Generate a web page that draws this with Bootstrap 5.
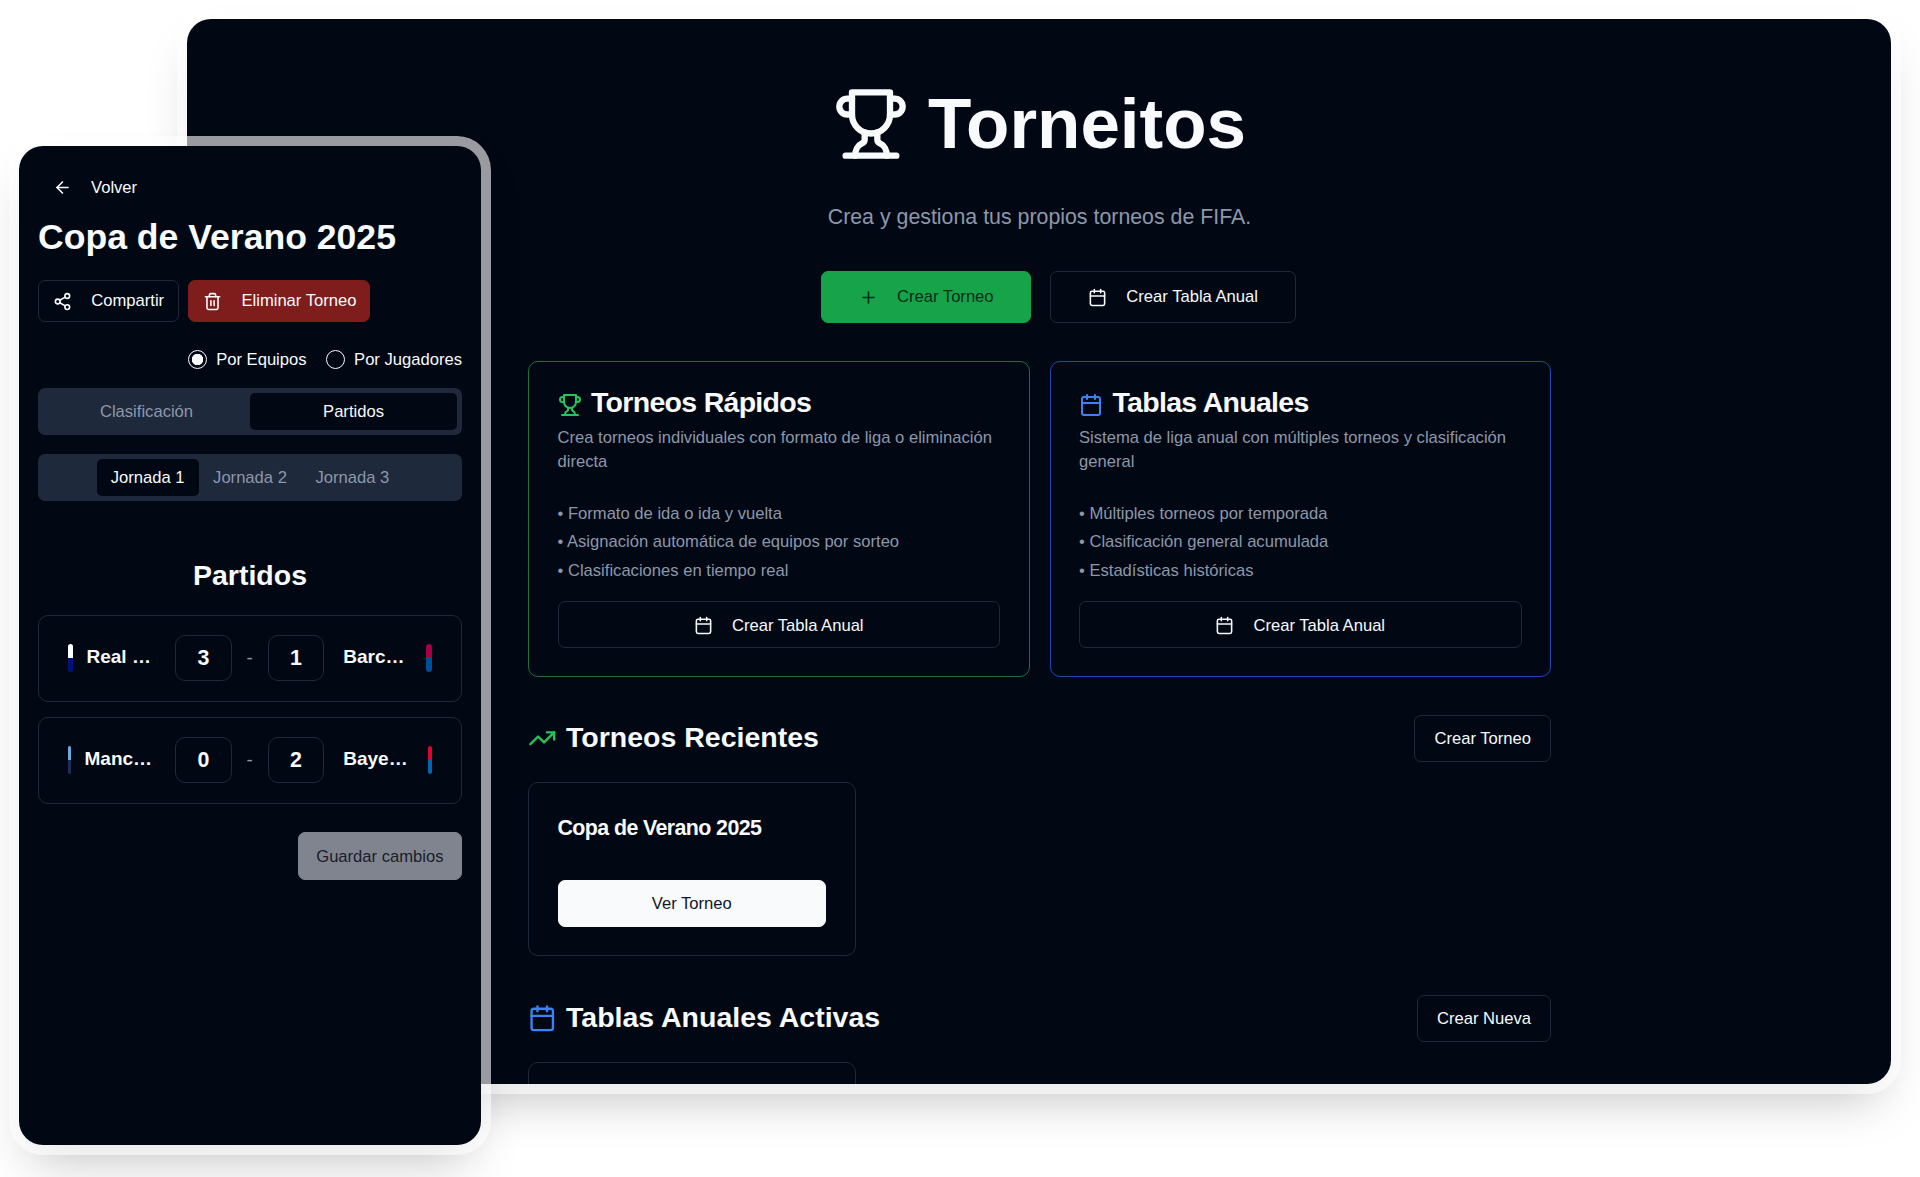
<!DOCTYPE html>
<html lang="es">
<head>
<meta charset="utf-8">
<title>Torneitos</title>
<link href="https://cdn.jsdelivr.net/npm/bootstrap@5.3.0/dist/css/bootstrap.min.css" rel="stylesheet">
<style>
:root{--ink:#010814;--line:#1e293b;--fg:#f8fafc;--muted:#8d97aa;}
html,body{height:100%;overflow:hidden;background:#fff;}
body{font-family:"Liberation Sans",Arial,sans-serif;font-size:16.6px;color:var(--fg);position:relative;}
.ico{fill:none;stroke:currentColor;stroke-width:2;stroke-linecap:round;stroke-linejoin:round;flex:none;width:19px;height:19px;}
.ico-h{width:76px;height:76px;}
.ico-c{width:24px;height:24px;}
.ico-s{width:28.5px;height:28.5px;}
.c-green{color:#22c55e;}
.c-blue{color:#3b82f6;}

.win-frame{box-shadow:0 0 0 10px rgba(255,255,255,.6),0 25px 50px -12px rgba(0,0,0,.25);}
.win-wide{position:absolute;left:187px;top:19px;width:1704px;height:1065px;background:var(--ink);border-radius:24px;}
.win-phone{position:absolute;left:19px;top:146px;width:462px;height:999px;background:var(--ink);border-radius:24px;padding:22px 19px 0;}
.wide-clip{height:100%;overflow:hidden;border-radius:24px;padding-top:63px;}
.wide-inner{width:1023px;margin:0 0 0 341px;}

.hero-title{font-size:71px;font-weight:700;line-height:84px;margin:0;gap:19px;color:var(--fg);}
.hero-sub{font-size:21.35px;line-height:33px;color:var(--muted);margin:34.5px 0 0;}
.hero-btns{margin:37px 0 0 38px;gap:19px;}

.btn-t{--bs-btn-font-size:16.6px;--bs-btn-line-height:23.75px;--bs-btn-border-radius:7px;--bs-btn-color:var(--fg);--bs-btn-bg:var(--ink);--bs-btn-border-color:var(--line);--bs-btn-hover-color:var(--fg);--bs-btn-hover-bg:var(--ink);--bs-btn-hover-border-color:var(--line);--bs-btn-padding-y:0;gap:19px;font-family:inherit;padding-top:1.5px;}
.btn-big{height:52px;--bs-btn-padding-x:36.9px;}
.btn-md{height:47px;--bs-btn-padding-x:19px;}
.btn-sm2{height:42px;--bs-btn-padding-x:14.3px;}
.btn-green{--bs-btn-bg:#16a34a;--bs-btn-border-color:#16a34a;--bs-btn-color:#052e16;--bs-btn-hover-bg:#16a34a;--bs-btn-hover-border-color:#16a34a;--bs-btn-hover-color:#052e16;}
.btn-red{--bs-btn-bg:#7f1d1d;--bs-btn-border-color:#7f1d1d;--bs-btn-hover-bg:#7f1d1d;--bs-btn-hover-border-color:#7f1d1d;padding-left:14px;padding-right:12.5px;}
.btn-light2{--bs-btn-bg:#f8fafc;--bs-btn-border-color:#f8fafc;--bs-btn-color:#0f172a;--bs-btn-hover-bg:#f8fafc;--bs-btn-hover-border-color:#f8fafc;--bs-btn-hover-color:#0f172a;}
.btn-dim{--bs-btn-bg:#80848e;--bs-btn-border-color:#80848e;--bs-btn-color:#1a1d2b;--bs-btn-hover-bg:#80848e;--bs-btn-hover-border-color:#80848e;--bs-btn-hover-color:#1a1d2b;height:47.5px;--bs-btn-padding-x:17.5px;}
.btn-ghost{--bs-btn-border-color:transparent;--bs-btn-hover-border-color:transparent;height:38px;--bs-btn-padding-x:14px;}

.tcard{--bs-card-bg:var(--ink);--bs-card-border-color:var(--line);--bs-card-border-radius:10px;--bs-card-inner-border-radius:9px;--bs-card-color:var(--fg);}
.tcard-g{--bs-card-border-color:#1f7040;}
.tcard-b{--bs-card-border-color:#2547b5;}
.feat-row{margin-top:38.5px;gap:20px;}
.feat-row .tcard{flex:1 1 0;height:316px;}
.tcard-pad{padding:28.5px;}
.feat-title{font-size:28.5px;line-height:28.5px;height:28.5px;font-weight:700;letter-spacing:-.7px;margin:0;gap:9.5px;}
.feat-title span{margin-bottom:5px;}
.feat-desc{color:var(--muted);line-height:23.75px;margin:7px 0 0;}
.feat-list{color:var(--muted);line-height:23.75px;margin:28px 0 19px;padding:0;list-style:none;display:flex;flex-direction:column;gap:4.75px;}

.sect-head{margin-top:38px;height:47px;}
.sect-head2{margin-top:39px;}
.sect-title{font-size:28.5px;line-height:34px;font-weight:700;margin:0;gap:9.5px;}
.sect-title span{margin-bottom:3px;}
.mini-card{width:327.5px;margin-top:20px;}
.mini-h{height:174px;}
.mini-title{font-size:21.4px;line-height:30px;font-weight:700;letter-spacing:-.6px;margin:1px 0 37px;}

.p-title{font-size:35.6px;line-height:47.5px;font-weight:700;margin:8px 0 0;}
.p-actions{gap:9px;margin-top:18px;}
.p-radios{gap:19px;margin-top:26px;height:24px;}
.p-radio{gap:9.5px;line-height:24px;}
.p-radio .form-check-input{width:19px;height:19px;margin:0;background-color:transparent;background-image:none;border:1.5px solid var(--fg);}
.p-radio .form-check-input:checked{background:radial-gradient(circle,var(--fg) 0 5.5px,transparent 6px);border-color:var(--fg);}
.seg-bar{background:var(--line);border-radius:7px;padding:5px;height:47px;}
.seg-a{margin-top:16px;}
.seg-b{margin-top:19px;}
.seg-bar .nav-link{color:var(--muted);font-size:16.6px;line-height:23.75px;padding:7.5px 14.25px 6.5px;border-radius:5px;text-align:center;}
.seg-bar .nav-link.active{background:var(--ink);color:var(--fg);}
.p-h{font-size:28.5px;line-height:34px;font-weight:700;text-align:center;margin:57px 0 0;}
.match{margin-top:15px;height:87px;}
.match-first{margin-top:23px;}
.match-in{padding:0 28.5px;height:100%;}
.team{width:88.75px;gap:14px;}
.team-name{font-size:19px;font-weight:700;line-height:24px;min-width:0;flex:1 1 0;margin-top:-2px;}
.stripe{display:flex;flex-direction:column;height:28px;border-radius:3px;overflow:hidden;flex:none;}
.stripe i{display:block;flex:1;}
.w5{width:5px;}.w6{width:6px;}.w3{width:3px;}.w4{width:4px;}
.s-wh{background:#fff;}.s-nv{background:#00127a;}.s-gr{background:#a50044;}.s-bc{background:#004d98;}
.s-sk{background:#6cabdd;}.s-dk{background:#1c2c5b;}.s-rd{background:#dc052d;}.s-by{background:#0066b2;}
.score-box{width:149px;margin:0 19px;color:var(--muted);font-size:19px;}
.score-in{width:56.5px;height:46.5px;padding:0;text-align:center;font-size:21.4px;font-weight:700;color:var(--fg);background:var(--ink);border:1px solid var(--line);border-radius:10px;font-family:inherit;}
.score-in:focus{color:var(--fg);background:var(--ink);border-color:var(--line);box-shadow:none;}
.save-row{margin-top:28.5px;}
</style>
</head>
<body>
<svg width="0" height="0" class="position-absolute">
<defs>
<symbol id="i-trophy" viewBox="0 0 24 24"><path d="M6 9H4.5a2.5 2.5 0 0 1 0-5H6"/><path d="M18 9h1.5a2.5 2.5 0 0 0 0-5H18"/><path d="M4 22h16"/><path d="M10 14.66V17c0 .55-.47.98-.97 1.21C7.85 18.75 7 20.24 7 22"/><path d="M14 14.66V17c0 .55.47.98.97 1.21C16.15 18.75 17 20.24 17 22"/><path d="M18 2H6v7a6 6 0 0 0 12 0V2Z"/></symbol>
<symbol id="i-cal" viewBox="0 0 24 24"><path d="M8 2v4"/><path d="M16 2v4"/><rect width="18" height="18" x="3" y="4" rx="2"/><path d="M3 10h18"/></symbol>
<symbol id="i-plus" viewBox="0 0 24 24"><path d="M5 12h14"/><path d="M12 5v14"/></symbol>
<symbol id="i-back" viewBox="0 0 24 24"><path d="m12 19-7-7 7-7"/><path d="M19 12H5"/></symbol>
<symbol id="i-share" viewBox="0 0 24 24"><circle cx="18" cy="5" r="3"/><circle cx="6" cy="12" r="3"/><circle cx="18" cy="19" r="3"/><line x1="8.59" x2="15.42" y1="13.51" y2="17.49"/><line x1="15.41" x2="8.59" y1="6.51" y2="10.49"/></symbol>
<symbol id="i-trash" viewBox="0 0 24 24"><path d="M3 6h18"/><path d="M19 6v14c0 1-1 2-2 2H7c-1 0-2-1-2-2V6"/><path d="M8 6V4c0-1 1-2 2-2h4c1 0 2 1 2 2v2"/><line x1="10" x2="10" y1="11" y2="17"/><line x1="14" x2="14" y1="11" y2="17"/></symbol>
<symbol id="i-trend" viewBox="0 0 24 24"><polyline points="22 7 13.5 15.5 8.5 10.5 2 17"/><polyline points="16 7 22 7 22 13"/></symbol>
</defs>
</svg>

<section class="win-wide win-frame">
  <div class="wide-clip">
    <div class="wide-inner">
      <h1 class="hero-title d-flex justify-content-center align-items-center">
        <svg class="ico ico-h"><use href="#i-trophy"/></svg><span>Torneitos</span>
      </h1>
      <p class="hero-sub text-center">Crea y gestiona tus propios torneos de FIFA.</p>
      <div class="hero-btns d-flex justify-content-center">
        <button class="btn btn-t btn-big btn-green d-inline-flex align-items-center"><svg class="ico"><use href="#i-plus"/></svg>Crear Torneo</button>
        <button class="btn btn-t btn-big d-inline-flex align-items-center"><svg class="ico"><use href="#i-cal"/></svg>Crear Tabla Anual</button>
      </div>

      <div class="feat-row d-flex">
        <div class="card tcard tcard-g">
          <div class="tcard-pad">
            <h3 class="feat-title d-flex align-items-center"><svg class="ico ico-c c-green"><use href="#i-trophy"/></svg><span>Torneos Rápidos</span></h3>
            <p class="feat-desc">Crea torneos individuales con formato de liga o eliminación directa</p>
            <ul class="feat-list">
              <li>• Formato de ida o ida y vuelta</li>
              <li>• Asignación automática de equipos por sorteo</li>
              <li>• Clasificaciones en tiempo real</li>
            </ul>
            <button class="btn btn-t btn-md w-100 d-flex align-items-center justify-content-center"><svg class="ico"><use href="#i-cal"/></svg>Crear Tabla Anual</button>
          </div>
        </div>
        <div class="card tcard tcard-b">
          <div class="tcard-pad">
            <h3 class="feat-title d-flex align-items-center"><svg class="ico ico-c c-blue"><use href="#i-cal"/></svg><span>Tablas Anuales</span></h3>
            <p class="feat-desc">Sistema de liga anual con múltiples torneos y clasificación general</p>
            <ul class="feat-list">
              <li>• Múltiples torneos por temporada</li>
              <li>• Clasificación general acumulada</li>
              <li>• Estadísticas históricas</li>
            </ul>
            <button class="btn btn-t btn-md w-100 d-flex align-items-center justify-content-center"><svg class="ico"><use href="#i-cal"/></svg>Crear Tabla Anual</button>
          </div>
        </div>
      </div>

      <div class="sect-head d-flex justify-content-between align-items-center">
        <h2 class="sect-title d-flex align-items-center"><svg class="ico ico-s c-green"><use href="#i-trend"/></svg><span>Torneos Recientes</span></h2>
        <button class="btn btn-t btn-md">Crear Torneo</button>
      </div>
      <div class="card tcard mini-card mini-h">
        <div class="tcard-pad">
          <h4 class="mini-title">Copa de Verano 2025</h4>
          <button class="btn btn-t btn-md btn-light2 w-100">Ver Torneo</button>
        </div>
      </div>

      <div class="sect-head sect-head2 d-flex justify-content-between align-items-center">
        <h2 class="sect-title d-flex align-items-center"><svg class="ico ico-s c-blue"><use href="#i-cal"/></svg><span>Tablas Anuales Activas</span></h2>
        <button class="btn btn-t btn-md">Crear Nueva</button>
      </div>
      <div class="card tcard mini-card mini-h"></div>
    </div>
  </div>
</section>

<section class="win-phone win-frame">
  <button class="btn btn-t btn-ghost d-inline-flex align-items-center"><svg class="ico"><use href="#i-back"/></svg>Volver</button>
  <h2 class="p-title">Copa de Verano 2025</h2>
  <div class="p-actions d-flex">
    <button class="btn btn-t btn-sm2 d-inline-flex align-items-center"><svg class="ico"><use href="#i-share"/></svg>Compartir</button>
    <button class="btn btn-t btn-sm2 btn-red d-inline-flex align-items-center"><svg class="ico"><use href="#i-trash"/></svg>Eliminar Torneo</button>
  </div>
  <div class="p-radios d-flex justify-content-end align-items-center">
    <label class="p-radio d-flex align-items-center"><input class="form-check-input" type="radio" name="modo" checked>Por Equipos</label>
    <label class="p-radio d-flex align-items-center"><input class="form-check-input" type="radio" name="modo">Por Jugadores</label>
  </div>
  <ul class="nav nav-justified seg-bar seg-a">
    <li class="nav-item"><a class="nav-link" href="#">Clasificación</a></li>
    <li class="nav-item"><a class="nav-link active" href="#">Partidos</a></li>
  </ul>
  <ul class="nav justify-content-center seg-bar seg-b">
    <li class="nav-item"><a class="nav-link active" href="#">Jornada 1</a></li>
    <li class="nav-item"><a class="nav-link" href="#">Jornada 2</a></li>
    <li class="nav-item"><a class="nav-link" href="#">Jornada 3</a></li>
  </ul>
  <h3 class="p-h">Partidos</h3>

  <div class="card tcard match match-first">
    <div class="match-in d-flex align-items-center">
      <div class="team d-flex align-items-center"><span class="stripe w5"><i class="s-wh"></i><i class="s-nv"></i></span><span class="team-name text-truncate">Real Madrid</span></div>
      <div class="score-box d-flex justify-content-between align-items-center"><input class="form-control score-in" value="3" aria-label="Goles local"><span>-</span><input class="form-control score-in" value="1" aria-label="Goles visitante"></div>
      <div class="team d-flex align-items-center"><span class="team-name text-truncate">Barcelona</span><span class="stripe w6"><i class="s-gr"></i><i class="s-bc"></i></span></div>
    </div>
  </div>
  <div class="card tcard match">
    <div class="match-in d-flex align-items-center">
      <div class="team d-flex align-items-center"><span class="stripe w3"><i class="s-sk"></i><i class="s-dk"></i></span><span class="team-name text-truncate">Manchester City</span></div>
      <div class="score-box d-flex justify-content-between align-items-center"><input class="form-control score-in" value="0" aria-label="Goles local"><span>-</span><input class="form-control score-in" value="2" aria-label="Goles visitante"></div>
      <div class="team d-flex align-items-center"><span class="team-name text-truncate">Bayern Munich</span><span class="stripe w4"><i class="s-rd"></i><i class="s-by"></i></span></div>
    </div>
  </div>
  <div class="save-row d-flex justify-content-end">
    <button class="btn btn-t btn-dim">Guardar cambios</button>
  </div>
</section>
<script src="https://cdn.jsdelivr.net/npm/bootstrap@5.3.0/dist/js/bootstrap.bundle.min.js"></script>
</body>
</html>
